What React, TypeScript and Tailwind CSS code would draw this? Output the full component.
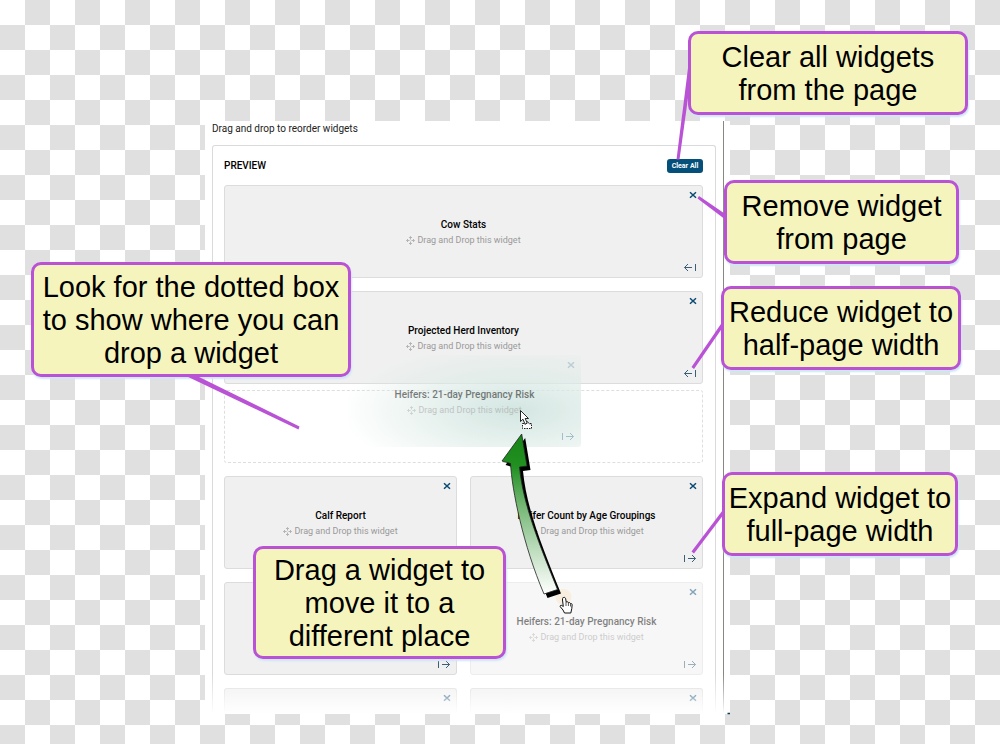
import clsx from "clsx";
import type { ReactNode } from "react";

type CardProps = {
  title?: string;
  wide?: boolean;
  faded?: boolean;
  cut?: boolean;
};

function MoveIcon() {
  return (
    <svg viewBox="0 0 9 9" className="h-[9px] w-[9px]" fill="none" stroke="currentColor" strokeWidth="0.7" aria-hidden="true">
      <path d="M3 2 4.500 .5 6 2M3 7 4.500 8.500 6 7M2 3 .5 4.500 2 6M7 3 8.500 4.500 7 6M4.500 1V3.500M4.500 5.500V8M1 4.500H3.500M5.500 4.500H8" />
    </svg>
  );
}

function CloseIcon() {
  return (
    <svg viewBox="0 0 8 8" className="h-2 w-2" fill="none" stroke="currentColor" strokeWidth="1.5" aria-hidden="true">
      <path d="M1 1.200 7 6.800M7 1.200 1 6.800" />
    </svg>
  );
}

function ResizeIcon({ expand }: { expand: boolean }) {
  return (
    <svg viewBox="0 0 14 9" className="h-[9px] w-[14px]" fill="none" stroke="currentColor" aria-hidden="true">
      {expand ? (
        <path d="M1.500 1V8M5 4.500H12.500M9 1 12.500 4.500 9 8" />
      ) : (
        <path d="M12.500 1V8M9 4.500H1.500M5 1 1.500 4.500 5 8" />
      )}
    </svg>
  );
}

function CardText({ title }: { title: string }) {
  return (
    <div className="pt-px text-center">
      <h3 className="text-[10px] font-medium leading-4 text-black">{title}</h3>
      <p className="flex items-center justify-center gap-0.5 text-[9px] leading-[15px] text-[#999]">
        <MoveIcon />
        Drag and Drop this widget
      </p>
    </div>
  );
}

function WidgetCard({ title, wide = false, faded = false, cut = false }: CardProps) {
  return (
    <section
      className={clsx(
        "relative flex items-center justify-center border border-[#dcdcdc] bg-[#f0f0f0]",
        wide && "col-span-2",
        faded && "opacity-50",
        cut ? "h-[26px] rounded-t-[3px] border-b-0" : "h-[93px] rounded-[3px]"
      )}
    >
      {title && <CardText title={title} />}
      <button type="button" aria-label="Remove widget" className="absolute right-[5px] top-[5px] text-[#0a4a73]">
        <CloseIcon />
      </button>
      {!cut && (
        <button
          type="button"
          aria-label={wide ? "Reduce to half width" : "Expand to full width"}
          className="absolute bottom-[5px] right-[5px] text-[#3c5f78]"
        >
          <ResizeIcon expand={!wide} />
        </button>
      )}
    </section>
  );
}

function Callout({ className, children }: { className: string; children: ReactNode }) {
  return (
    <div
      className={clsx(
        "absolute flex items-center justify-center whitespace-nowrap rounded-[10px] border-[3px] border-[#b952d5] bg-[#f6f4bd] pt-0.5 text-center text-[29px] leading-[33px] text-black shadow-[1px_2px_2px_#cfe6f5]",
        className
      )}
    >
      <p>{children}</p>
    </div>
  );
}

// Pointer lines that run from each callout to its target
function Leaders() {
  return (
    <svg width="1000" height="744" viewBox="0 0 1000 744" className="pointer-events-none absolute left-0 top-0" aria-hidden="true">
      <g fill="#b952d5">
        <path d="M688 68H690.500V80L679.500 159.500H676.500Z" />
        <path d="M697.500 198.500 699 196 726 214.500V220Z" />
        <path d="M723 321V327L694 369 691.500 367Z" />
        <path d="M724 508.500V514L694 553.500 691.500 551.500Z" />
        <path d="M184 375H195L299.500 426.500 298.500 429.500Z" />
      </g>
    </svg>
  );
}

// Drag arrow with the two mouse pointers at its ends
function DragArrow() {
  const shape =
    "M521.700 434 502 461 510.500 463.500C512 490 523 545 544 594L557.500 589.500C540 546 523 505 519.500 467L527 466Z";
  return (
    <svg width="1000" height="744" viewBox="0 0 1000 744" className="pointer-events-none absolute left-0 top-0" aria-hidden="true">
      <defs>
        <linearGradient id="arrowFill" x1="0" y1="0" x2="0" y2="1">
          <stop offset="0" stopColor="#168416" />
          <stop offset="0.2" stopColor="#219021" />
          <stop offset="0.45" stopColor="#75b775" />
          <stop offset="0.75" stopColor="#c4e0c4" />
          <stop offset="1" stopColor="#fff" />
        </linearGradient>
      </defs>
      <circle cx="563.500" cy="597" r="8" fill="#f8eedf" />
      <path d={shape} transform="translate(3.500 4)" />
      <path d={shape} fill="url(#arrowFill)" stroke="#222" strokeWidth="0.8" />
      <path
        d="M563.500 597.500c1.500-.5 2 .5 2.200 1.500l.5 3c1-.5 2-.2 2.200.7 1-.4 1.800 0 2.100.8 1.200-.2 1.700.5 1.600 1.500l-.3 3.500-1 4.500h-6.300l-1.500-3-2.700-3.200c-.7-1 .5-2 1.500-1.300l1.500 1-.8-6.500c-.1-1 .2-2 .5-2.500Z"
        fill="#fff"
        stroke="#111"
      />
      <path d="M566 602v4M568.400 603v3M570.500 604v2.500" stroke="#111" strokeWidth="0.7" />
      <rect x="522.500" y="423.500" width="9" height="5" fill="#fff" stroke="#222" strokeDasharray="1.500 1" />
      <path d="M525 424.500 527.500 421.500 530 424.500" fill="#fff" stroke="#222" strokeWidth="0.8" />
      <path d="M520.500 410.500V421.500L523 419.200 525 424.200 527.200 423.200 525.200 418.500H528.500Z" fill="#fff" stroke="#111" strokeWidth="0.9" />
      <path d="M727.500 713.500H730" stroke="#0a3d5c" strokeWidth="1.500" />
    </svg>
  );
}

function DragGhost() {
  return (
    <div className="absolute left-[348px] top-[355px] flex h-[92px] w-[233px] items-center justify-center rounded-[3px] bg-[radial-gradient(ellipse_175px_70px_at_72%_60%,#c9e0dacc_0%,#dcebe7b3_45%,#f0f5f400_100%)] font-[Roboto,sans-serif]">
      <div className="pt-0.5 opacity-50">
        <CardText title="Heifers: 21-day Pregnancy Risk" />
      </div>
      <span className="absolute right-1.5 top-1.5 text-[#0a4a73] opacity-20">
        <CloseIcon />
      </span>
      <span className="absolute bottom-1.5 right-1.5 text-[#0a4a73] opacity-30">
        <ResizeIcon expand />
      </span>
    </div>
  );
}

export default function App() {
  return (
    <main className="min-h-screen bg-[repeating-conic-gradient(#e0e0e0_0_25%,#fff_0_50%)] bg-[length:50px_50px] font-['Liberation_Sans',Arial,sans-serif]">
      <div className="relative mx-auto w-full max-w-[1000px] pb-[30px] pl-[205px] pr-[270px] pt-[121px]">
        <div className="relative bg-white pr-1.5 font-[Roboto,sans-serif]">
          <div className="border-r border-[#888880] pl-[7px] pr-[7px]">
            <p className="text-[10px] leading-4 text-[#222]">Drag and drop to reorder widgets</p>
            <div className="mt-2 rounded-t-[3px] border border-b-0 border-[#dadada] pl-[11px] pr-3">
              <header className="flex items-center justify-between pb-3 pt-[13px]">
                <h2 className="text-[10px] font-medium leading-3 text-black">PREVIEW</h2>
                <button type="button" className="h-3.5 w-9 rounded-[3px] bg-[#04507a] text-[7px] font-bold leading-3 text-white">
                  Clear All
                </button>
              </header>
              <div className="grid grid-cols-2 gap-[13px]">
                <WidgetCard title="Cow Stats" wide />
                <WidgetCard title="Projected Herd Inventory" wide />
                <div className="col-span-2 -mt-[7px] h-[73px] rounded-[3px] border border-dashed border-[#dedede]" />
                <WidgetCard title="Calf Report" />
                <WidgetCard title="Heifer Count by Age Groupings" />
                <WidgetCard />
                <WidgetCard title="Heifers: 21-day Pregnancy Risk" faded />
                <WidgetCard cut />
                <WidgetCard cut />
              </div>
            </div>
          </div>
          <div className="absolute inset-x-0 bottom-0 h-10 bg-linear-to-b from-white/0 to-white" />
        </div>

        {/* Annotations laid over the page */}
        <DragGhost />
        <DragArrow />
        <Callout className="left-[688px] top-[31px] h-[84px] w-[280px]">
          Clear all widgets
          <br />
          from the page
        </Callout>
        <Callout className="left-[724px] top-[180px] h-[84px] w-[235px]">
          Remove widget
          <br />
          from page
        </Callout>
        <Callout className="left-[721px] top-[286px] h-[84px] w-[240px]">
          Reduce widget to
          <br />
          half-page width
        </Callout>
        <Callout className="left-[722px] top-[472px] h-[84px] w-[236px]">
          Expand widget to
          <br />
          full-page width
        </Callout>
        <Callout className="left-[31px] top-[262px] h-[115px] w-[320px]">
          Look for the dotted box
          <br />
          to show where you can
          <br />
          drop a widget
        </Callout>
        <Callout className="left-[253px] top-[546px] h-[113px] w-[253px]">
          Drag a widget to
          <br />
          move it to a
          <br />
          different place
        </Callout>
        <Leaders />
      </div>
    </main>
  );
}
